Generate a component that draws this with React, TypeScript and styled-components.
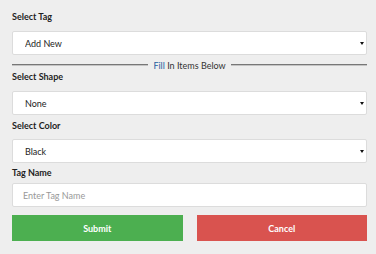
import styled, { createGlobalStyle } from "styled-components"

const GlobalStyle = createGlobalStyle`
  html, body {
    margin: 0;
    background: #eeeeee;
  }
  body {
    font-family: Lato, 'Open Sans', sans-serif;
    color: #222;
  }
`

const Form = styled.form`
  display: flex;
  flex-direction: column;
  width: 376px;
  height: 254px;
  box-sizing: border-box;
  padding: 11px 9px 0 12px;
`

const Label = styled.label<{ $top: number }>`
  display: block;
  margin-top: ${p => p.$top}px;
  height: 12px;
  line-height: 12px;
  font-size: 9px;
  font-weight: 700;
  color: #1e1e1e;
`

const SelectWrap = styled.div<{ $top: number }>`
  position: relative;
  margin-top: ${p => p.$top}px;
  height: 24px;
`

const Select = styled.select`
  appearance: none;
  display: block;
  width: 100%;
  height: 24px;
  box-sizing: border-box;
  border: 1px solid #dcdcdc;
  border-radius: 2px;
  background: #fff;
  padding: 0 0 0 12px;
  font-family: inherit;
  font-size: 9px;
  color: #222;
  outline: none;
`

const Arrow = styled.span`
  position: absolute;
  right: 3px;
  top: 11px;
  width: 0;
  height: 0;
  border-left: 2.5px solid transparent;
  border-right: 2.5px solid transparent;
  border-top: 3px solid #111;
  pointer-events: none;
`

const Divider = styled.div`
  display: flex;
  align-items: center;
  gap: 5px;
  margin-top: 4px;
  height: 12px;
  font-size: 9px;
  color: #333;
  white-space: nowrap;
`

const Rule = styled.span`
  flex: 1;
  border-top: 1px solid #777;
  border-bottom: 1px solid #c4c4c4;
  box-sizing: border-box;
  height: 2px;
`

const Accent = styled.span`
  color: #1f5f9f;
`

const Input = styled.input`
  display: block;
  margin-top: 4px;
  height: 24px;
  box-sizing: border-box;
  border: 1px solid #dcdcdc;
  border-radius: 2px;
  background: #fff;
  padding: 0 0 0 10px;
  font-family: inherit;
  font-size: 9px;
  outline: none;
  &::placeholder {
    color: #999;
  }
`

const Buttons = styled.div`
  display: grid;
  grid-template-columns: 1fr 1fr;
  column-gap: 14px;
  margin-top: 8px;
`

const Button = styled.button<{ $bg: string }>`
  height: 26px;
  border: none;
  border-radius: 0;
  background: ${p => p.$bg};
  color: #fff;
  font-family: inherit;
  font-size: 9px;
  font-weight: 700;
  cursor: pointer;
`

const Dropdown = ({ top, options }: { top: number; options: string[] }) => (
  <SelectWrap $top={top}>
    <Select defaultValue={options[0]}>
      {options.map(o => <option key={o}>{o}</option>)}
    </Select>
    <Arrow />
  </SelectWrap>
)

export default function App() {
  return (
    <>
      <GlobalStyle />
      <Form onSubmit={e => e.preventDefault()}>
        <Label $top={0}>Select Tag</Label>
        <Dropdown top={8} options={["Add New"]} />
        <Divider>
          <Rule />
          <span><Accent>Fill</Accent> In Items Below</span>
          <Rule />
        </Divider>
        <Label $top={0}>Select Shape</Label>
        <Dropdown top={8} options={["None", "Circle", "Square"]} />
        <Label $top={5}>Select Color</Label>
        <Dropdown top={7} options={["Black", "Red", "Blue"]} />
        <Label $top={4}>Tag Name</Label>
        <Input placeholder="Enter Tag Name" />
        <Buttons>
          <Button type="submit" $bg="#4caf50">Submit</Button>
          <Button type="button" $bg="#d9534f">Cancel</Button>
        </Buttons>
      </Form>
    </>
  )
}
